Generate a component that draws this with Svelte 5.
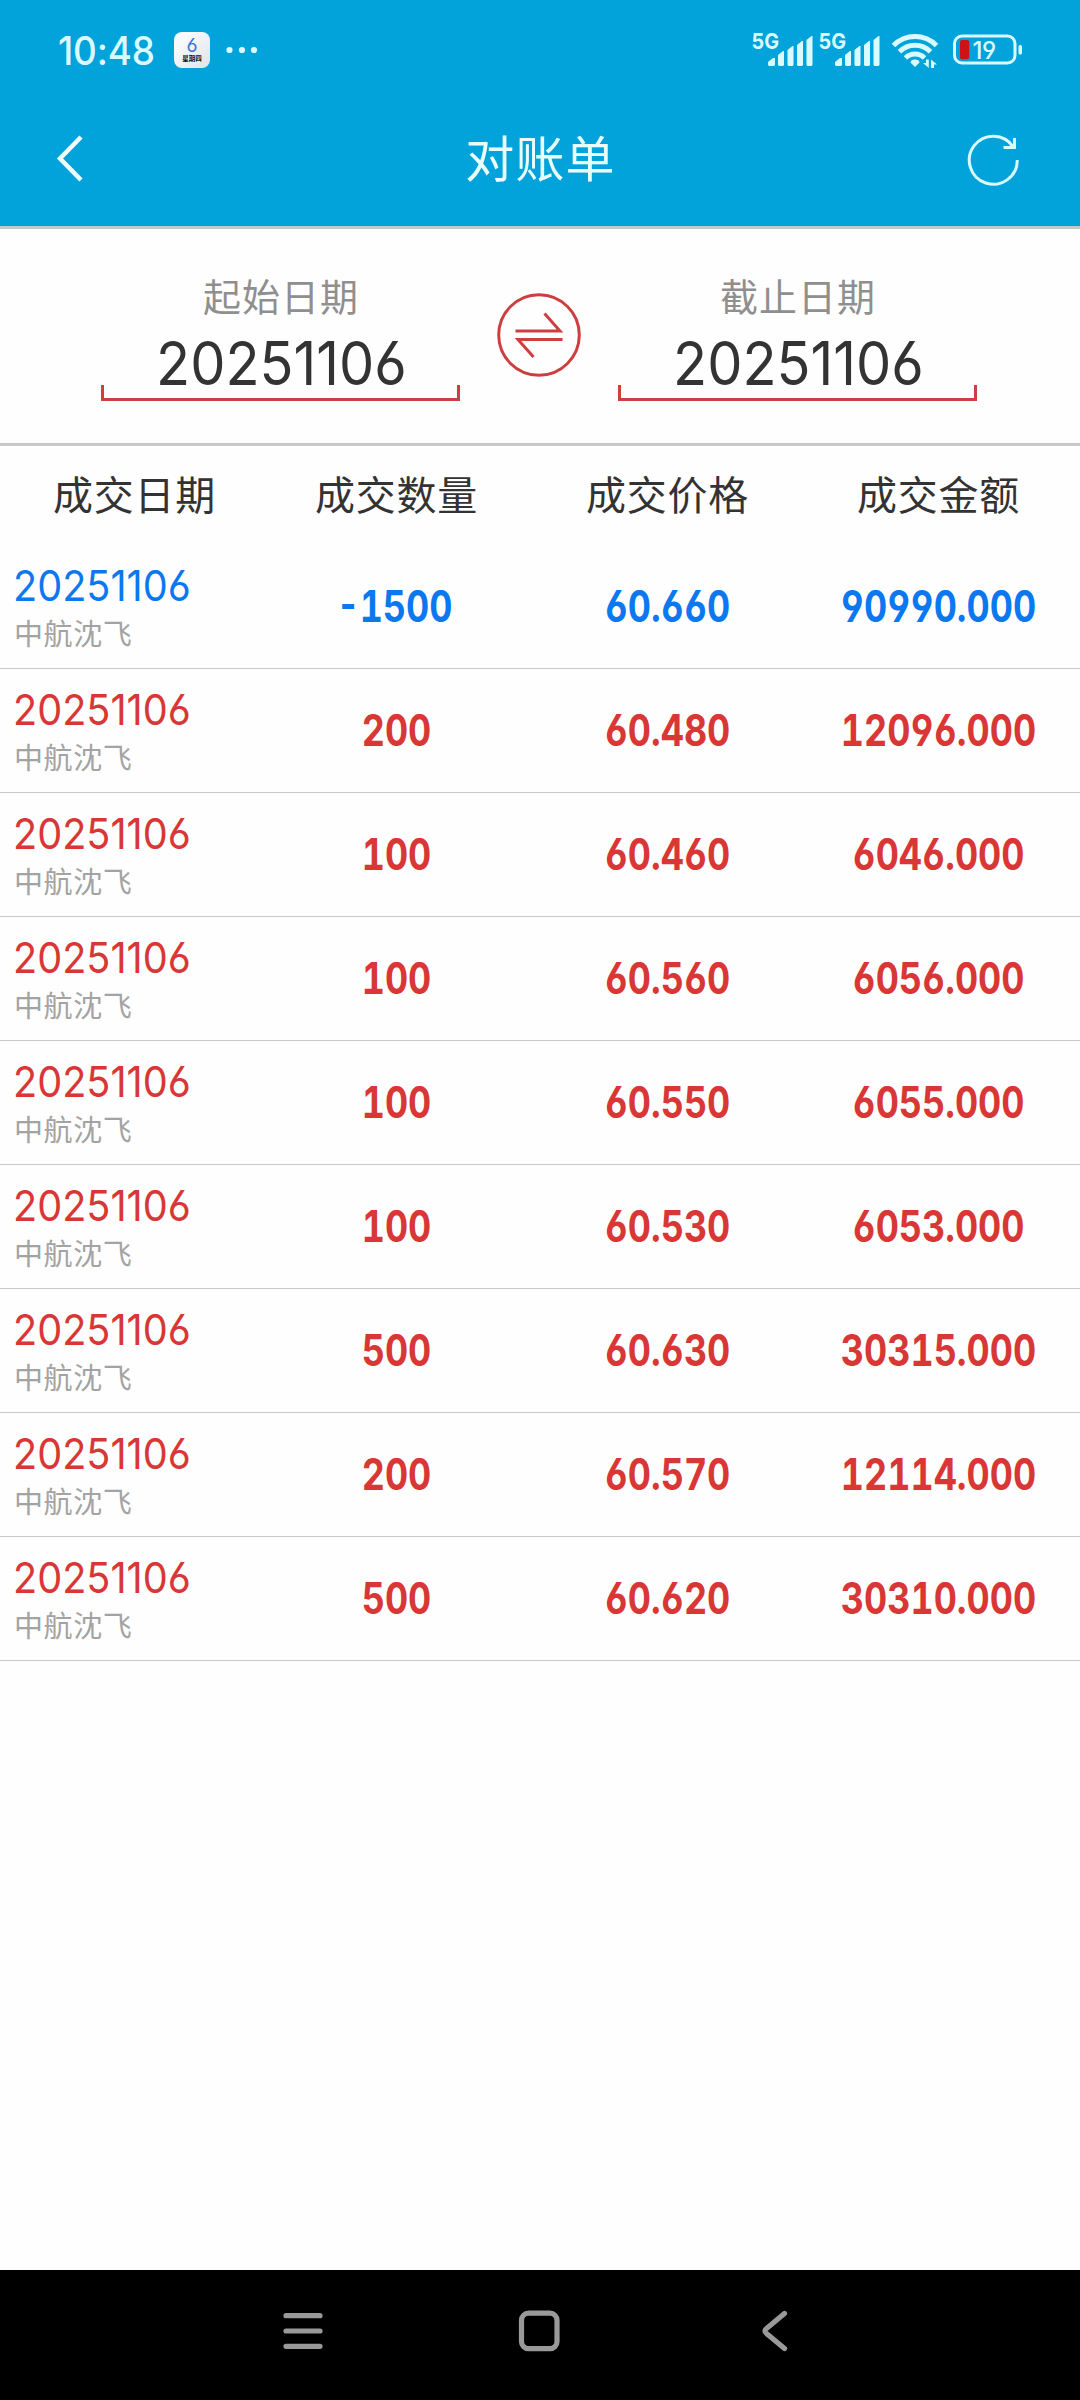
<script>
    const columns = ["成交日期", "成交数量", "成交价格", "成交金额"];

    const trades = [
        { side: "sell", qty: "-1500", price: "60.660", amount: "90990.000" },
        { side: "buy", qty: "200", price: "60.480", amount: "12096.000" },
        { side: "buy", qty: "100", price: "60.460", amount: "6046.000" },
        { side: "buy", qty: "100", price: "60.560", amount: "6056.000" },
        { side: "buy", qty: "100", price: "60.550", amount: "6055.000" },
        { side: "buy", qty: "100", price: "60.530", amount: "6053.000" },
        { side: "buy", qty: "500", price: "60.630", amount: "30315.000" },
        { side: "buy", qty: "200", price: "60.570", amount: "12114.000" },
        { side: "buy", qty: "500", price: "60.620", amount: "30310.000" },
    ];

    let startDate = "20251106";
    let endDate = "20251106";

    function swapDates() {
        [startDate, endDate] = [endDate, startDate];
    }
</script>

<div class="screen">
    <header>
        <div class="status-bar">
            <span class="clock">10:48</span>
            <span class="calendar">
                <b>6</b>
                <i>星期四</i>
            </span>
            <svg class="dots" width="32" height="8" viewBox="0 0 32 8">
                <circle cx="3.5" cy="4" r="3.1" />
                <circle cx="16" cy="4" r="3.1" />
                <circle cx="28" cy="4" r="3.1" />
            </svg>

            <div class="status-right">
                {#each [1, 2] as sim (sim)}
                    <svg class="signal" width="67" height="56" viewBox="0 -10 67 56">
                        <text x="-0.500" y="17.300" textLength="27.500" lengthAdjust="spacingAndGlyphs">5G</text>
                        <path d="M16 33v-3l5-4h2v7l-1 1h-5zM26 33V23l5-4h1v14l-1 1h-4zM35.500 33V18l5-4h1v19l-1 1h-4zM45 33V13l5-4h1v24l-1 1h-4zM54.500 33V8l5-4h1v29l-1 1h-4z" />
                    </svg>
                {/each}
                <svg class="wifi" width="48" height="36" viewBox="0 0 48 36">
                    <g fill="none" stroke-width="5">
                        <path d="M2.500 13.500a30 30 0 0 1 43 0" />
                        <path d="M8.500 19.800a21.500 21.500 0 0 1 31 0" />
                        <path d="M14.500 26a13.500 13.500 0 0 1 19 0" />
                    </g>
                    <path stroke="none" d="M24 35l-4.500-4.500q0-3 4.500-3t4.500 3z" />
                    <path stroke="none" d="M35 27.500h2.800V36L32 31h3zM40 36v-8.500l6 5h-3V36z" />
                </svg>
                <svg class="battery" width="70" height="32" viewBox="0 0 70 32">
                    <rect x="1.500" y="2" width="60.500" height="27" rx="7.500" fill="none" stroke-width="3" />
                    <rect class="charge" x="7" y="6" width="9.200" height="19.200" rx="2" />
                    <rect x="65.500" y="11" width="3.500" height="9.500" rx="1.500" stroke="none" />
                    <text x="19.500" y="24.500">19</text>
                </svg>
            </div>
        </div>

        <div class="title-bar">
            <button class="icon-button" aria-label="返回">
                <svg width="28" height="50" viewBox="0 0 28 50">
                    <path d="M25 2L4 23.500L25 45" />
                </svg>
            </button>
            <h1>对账单</h1>
            <button class="icon-button" aria-label="刷新">
                <svg class="refresh" width="54" height="54" viewBox="0 0 54 54">
                    <path d="M51.300 27A24 24 0 1 1 47.200 13.800" />
                    <path d="M37.500 14.600H48.500V5" />
                </svg>
            </button>
        </div>
    </header>

    <section class="range">
        <div class="date-field">
            <span class="caption">起始日期</span>
            <span class="value">{startDate}</span>
            <span class="bracket"></span>
        </div>
        <button class="swap" aria-label="交换" on:click={swapDates}>
            <svg width="84" height="84" viewBox="0 0 84 84">
                <circle cx="42" cy="42" r="40.300" />
                <path d="M18.500 38H63L47.500 20.500" />
                <path d="M65.500 46.500H21L36.500 64" />
            </svg>
        </button>
        <div class="date-field">
            <span class="caption">截止日期</span>
            <span class="value">{endDate}</span>
            <span class="bracket"></span>
        </div>
    </section>

    <div class="grid head">
        {#each columns as name}
            <span>{name}</span>
        {/each}
    </div>

    <main>
        {#each trades as trade}
            <div class="grid row {trade.side}">
                <div class="security">
                    <span class="date">20251106</span>
                    <span class="name">中航沈飞</span>
                </div>
                <span class="num qty">{trade.qty}</span>
                <span class="num">{trade.price}</span>
                <span class="num">{trade.amount}</span>
            </div>
        {/each}
    </main>

    <nav>
        <svg width="40" height="44" viewBox="0 0 40 44">
            <path d="M3 6.700H37M3 22H37M3 37.300H37" />
        </svg>
        <svg class="home" width="42" height="44" viewBox="0 0 42 44">
            <rect x="3.500" y="4.200" width="35.500" height="35.500" rx="7" />
        </svg>
        <svg width="30" height="44" viewBox="0 0 30 44">
            <path d="M24.500 4.500L6.500 19.500Q3.500 22 6.500 24.500L24.500 39.500" />
        </svg>
    </nav>
</div>

<style>
    :global(body) {
        margin: 0;
        background: #fefefe;
    }

    .screen {
        display: flex;
        flex-direction: column;
        width: 1080px;
        height: 2400px;
        background: #fefefe;
        color: #333;
        font-family: Inter, "Noto Sans CJK SC", sans-serif;
        font-feature-settings: "cv03", "cv04";
    }

    button {
        padding: 0;
        border: none;
        background: none;
        cursor: pointer;
    }

    svg {
        display: block;
        flex: none;
    }

    /* HEADER */
    header {
        box-sizing: border-box;
        height: 229px;
        background: #02a2da;
        border-bottom: 3px solid #c3cace;
    }

    .status-bar {
        display: flex;
        align-items: center;
        height: 100px;
        padding: 0 57px 0 58px;
        color: #d9fbff;
    }

    .clock {
        width: 116px;
        font-size: 39px;
        font-weight: 500;
        letter-spacing: -0.2px;
        transform: scaleX(0.945);
        transform-origin: left;
    }

    .calendar {
        display: flex;
        flex-direction: column;
        align-items: center;
        width: 36px;
        height: 36px;
        border-radius: 8px;
        background: linear-gradient(135deg, #fff, #dfe5ec);
    }

    .calendar b {
        margin-top: 4px;
        color: #3f72d8;
        font-size: 19px;
        font-weight: 400;
        line-height: 19px;
    }

    .calendar i {
        color: #111;
        font-size: 6.5px;
        font-style: normal;
        font-weight: 700;
        line-height: 8px;
    }

    .dots {
        margin-left: 16px;
        fill: #d9fbff;
    }

    .status-right {
        display: flex;
        align-items: center;
        margin-left: auto;
        fill: #d9fbff;
        stroke: #d9fbff;
    }

    .signal {
        overflow: visible;
        stroke: none;
    }

    .signal text {
        font-size: 22px;
        font-weight: 700;
    }

    .wifi {
        margin-left: 5px;
    }

    .battery {
        margin-left: 14px;
    }

    .battery text {
        stroke: none;
        font-size: 24px;
        font-weight: 500;
        letter-spacing: -0.5px;
    }

    .battery .charge {
        fill: #ce1217;
        stroke: none;
    }

    .title-bar {
        display: flex;
        align-items: center;
        justify-content: space-between;
        height: 120px;
        padding: 0 60px 0 56px;
    }

    .title-bar svg {
        fill: none;
        stroke: #f4ffff;
        stroke-width: 4.5;
    }

    .title-bar .refresh {
        stroke: #d9fbff;
        stroke-width: 3;
    }

    h1 {
        margin: 0 0 0 31px;
        color: #e9ffff;
        font-size: 49px;
        font-weight: 400;
        letter-spacing: 1.2px;
        line-height: 120px;
    }

    /* DATE RANGE */
    .range {
        display: flex;
        align-items: flex-start;
        box-sizing: border-box;
        height: 217px;
        padding-left: 101px;
        border-bottom: 3px solid #c9c9c9;
    }

    .date-field {
        display: flex;
        flex-direction: column;
        align-items: center;
        width: 359px;
        padding-top: 44px;
    }

    .caption {
        padding-left: 1px;
        color: #8f8f8f;
        font-size: 38px;
        letter-spacing: 1px;
        line-height: 48px;
    }

    .value {
        height: 64px;
        padding-left: 2px;
        font-size: 60px;
        line-height: 84px;
        white-space: nowrap;
        transform: scaleX(0.932);
    }

    .bracket {
        box-sizing: border-box;
        width: 359px;
        height: 16px;
        border: solid #cc3f40;
        border-width: 0 3.5px 3px;
    }

    .swap {
        width: 84px;
        height: 84px;
        margin: 64px 37px 0;
    }

    .swap svg {
        fill: none;
        stroke: #cc3f40;
        stroke-width: 3;
    }

    /* TRADES */
    .grid {
        display: grid;
        grid-template-columns: 261px 271px 271px 271px;
        align-items: center;
        text-align: center;
    }

    .head {
        box-sizing: border-box;
        height: 99px;
        padding-bottom: 5px;
        font-size: 40px;
        letter-spacing: 0.8px;
    }

    .head span:first-child {
        padding-left: 8px;
    }

    .row {
        box-sizing: border-box;
        height: 124px;
        border-bottom: 1px solid #c9c9c9;
    }

    .sell {
        color: #0c78ef;
    }

    .buy {
        color: #d83735;
    }

    .security {
        display: flex;
        flex-direction: column;
        padding: 12px 0 0 14px;
        text-align: left;
    }

    .date {
        margin-left: -1px;
        font-size: 43px;
        line-height: 45px;
        transform: scaleX(0.922);
        transform-origin: left;
    }

    .name {
        color: #a3a3a3;
        font-size: 29px;
        letter-spacing: 0.6px;
        line-height: 54px;
    }

    .num {
        padding-bottom: 2px;
        font-size: 43.5px;
        font-weight: 700;
        font-feature-settings: "tnum", "cv03", "cv04";
        transform: scaleX(0.825);
    }

    .sell .qty {
        padding-right: 5px;
    }

    /* SYSTEM NAVIGATION */
    nav {
        display: flex;
        align-items: center;
        justify-content: space-between;
        box-sizing: border-box;
        height: 130px;
        margin-top: auto;
        padding: 0 290px 8px 283px;
        background: #000;
        fill: none;
        stroke: #999;
        stroke-width: 5.2;
        stroke-linecap: round;
    }

    .home {
        margin-right: 6px;
    }
</style>
